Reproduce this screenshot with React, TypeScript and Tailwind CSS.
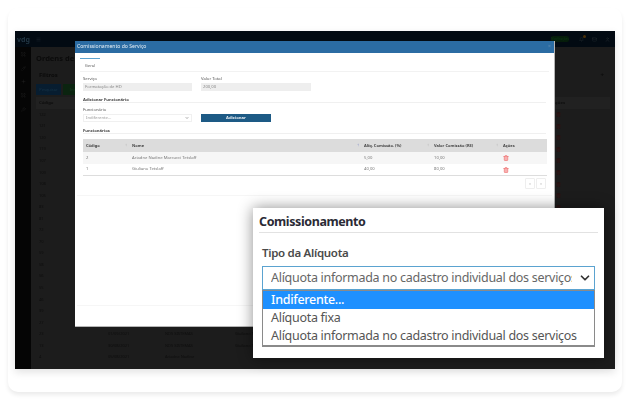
import React from 'react';
import { Trash2, ChevronDown, Menu, Bell, Mail, User, LayoutGrid, Pencil, Plus, Wrench } from 'lucide-react';

const font = { fontFamily: '"Noto Sans", sans-serif' };

const bgRows = ['122', '121', '120', '119', '107', '109', '108', '105', '83', '81', '72', '70', '59', '58', '56', '55', '46', '39', '27'];

const lowerRows = [
  ['23', '01/09/2021', 'NDS SISTEMAS', 'Giuliano Tetslaff'],
  ['13', '30/08/2021', 'NDS SISTEMAS', 'Giuliano Tetslaff'],
  ['4', '05/08/2021', 'Ariadne Nadine', ''],
];

const FakeField = ({ label, value, className }: { label: string; value: string; className: string }) => (
  <div className={className}>
    <div className="text-[4.2px] leading-[7px] text-[#555]">{label}</div>
    <div className="mt-[1px] h-[8px] bg-[#eeeeee] px-[2px] text-[4.2px] leading-[8px] text-[#888]">{value}</div>
  </div>
);

const SortIcon = () => <span className="text-[4px] leading-none text-[#aaa]">↕</span>;

const RedTrash = () => <Trash2 className="h-[6px] w-[6px] fill-[#f7b0b0] text-[#ee7070]" strokeWidth={2.5} />;

const tableCols = 'grid grid-cols-[46px_232px_70px_69px_47px] items-center';

const App: React.FC = () => {
  return (
    <div className="relative h-[400px] w-[630px] overflow-hidden bg-white" style={font}>
      {/* card */}
      <div className="ml-[8px] h-[392px] w-[614px] pt-[8px]">
        <div className="h-[384px] rounded-[10px] bg-white pl-[7px] pt-[23px] shadow-[0_3px_4px_rgba(0,0,0,0.08)]">
          {/* app screenshot, dimmed */}
          <div className="flex h-[338px] w-[600px] flex-col overflow-hidden bg-[#1c1c1c] shadow-[0_3px_8px_rgba(0,0,0,0.12)]">
            <div className="flex h-[16px] shrink-0 items-center bg-[#020a12] pl-[2px] pr-[5px] blur-[0.3px]">
              <span className="text-[7px] font-bold leading-none text-[#223644]">vdg</span>
              <Menu className="ml-[6px] h-[5px] w-[5px] text-[#1c2830]" />
              <span className="ml-auto mr-[10px] w-[18px] rounded-[2px] bg-[#051c0a] text-center text-[3px] leading-[6px] text-[#0c3a16]">Notificações</span>
              <div className="relative mr-[8px]">
                <Bell className="h-[5px] w-[5px] text-[#262d32]" />
                <span className="absolute right-[-2px] top-[-2px] h-[3px] w-[3px] rounded-full bg-[#4a3008]" />
              </div>
              <Mail className="mr-[8px] h-[5px] w-[5px] text-[#262d32]" />
              <User className="h-[5px] w-[5px] text-[#262d32]" />
            </div>
            <div className="flex min-h-0 flex-1">
              <div className="flex w-[16px] shrink-0 flex-col items-center gap-[8.7px] bg-[#050505] pt-[5px] text-[#242424] blur-[0.3px]">
                <LayoutGrid className="h-[5px] w-[5px]" />
                <Pencil className="h-[5px] w-[5px]" />
                <Plus className="h-[5px] w-[5px]" />
                <LayoutGrid className="h-[5px] w-[5px]" />
                <Wrench className="h-[5px] w-[5px]" />
              </div>
              <div className="min-w-0 flex-1 px-[5px] pt-[3px] blur-[0.3px]">
                <div className="text-[7.5px] font-bold leading-[16px] text-[#0b0b0b]">Ordens de Serviço</div>
                <div className="mt-[3px] flex items-center justify-between pl-[3px] pr-[6px] text-[6px] font-bold leading-[12px] text-[#0b0b0b]">
                  <span>Filtros</span>
                  <span>+</span>
                </div>
                <div className="mt-[3px] flex gap-[2px]">
                  <div className="flex h-[11px] w-[25px] items-center justify-center bg-[#071d30] text-[4px] text-[#173448]">Pesquisar</div>
                  <div className="flex h-[11px] w-[25px] items-center justify-center bg-[#0b2410] text-[4px] text-[#183a20]">Incluir</div>
                </div>
                <div className="mt-[2px] flex h-[12px] items-center justify-between bg-[#212121] px-[3px] text-[4.2px] font-bold text-[#0e0e0e]">
                  <span>Código</span>
                  <span className="mr-[42px]">Ações</span>
                </div>
                {bgRows.map((code) => (
                  <div key={code} className="flex h-[11.55px] items-center justify-between px-[3px] text-[4px] text-[#0e0e0e]">
                    <span>{code}</span>
                    <Trash2 className="mr-[46px] h-[5px] w-[5px] text-[#3a1010]" />
                  </div>
                ))}
                {lowerRows.map((r) => (
                  <div key={r[0]} className="flex h-[11.55px] items-center px-[3px] text-[4px] text-[#0e0e0e]">
                    <span className="w-[69px]">{r[0]}</span>
                    <span className="w-[57px]">{r[1]}</span>
                    <span className="w-[70px]">{r[2]}</span>
                    <span>{r[3]}</span>
                  </div>
                ))}
              </div>
            </div>
          </div>
        </div>
      </div>

      {/* modal over the dimmed app */}
      <div className="absolute left-[75px] top-[41px] flex h-[286px] w-[480px] flex-col border-b border-r border-[#b5b5b5] bg-white blur-[0.3px]">
        <div className="flex h-[12px] shrink-0 items-center justify-between bg-[#2b6ca3] pl-[2px] pr-[3px] text-[5.1px] text-[#e8f0f6]">
          <span>Comissionamento do Serviço</span>
          <span className="text-[#5d8cb3]">×</span>
        </div>
        <div className="px-[5px] pt-[5px]">
          <div className="border-b border-[#f2f2f2]">
            <div className="h-[13px] w-[20px] border-t border-[#5da3d0] pt-[3px] text-center text-[4.2px] leading-[7px] text-[#666]">Geral</div>
          </div>
        </div>
        <div className="flex gap-[9px] pl-[8px] pt-[3px]">
          <FakeField label="Serviço" value="Formatação de HD" className="w-[109px]" />
          <FakeField label="Valor Total" value="200,00" className="w-[110px]" />
        </div>
        <div className="mx-[8px] mt-[6px] border-b border-[#f0f0f0] text-[4.2px] font-bold leading-[5px] text-[#444]">Adicionar Funcionário</div>
        <div className="flex items-end gap-[9px] pl-[8px] pt-[3px]">
          <div className="w-[109px]">
            <div className="text-[4.2px] leading-[7px] text-[#555]">Funcionário</div>
            <div className="mt-[1px] flex h-[8px] items-center justify-between border border-[#f0f0f0] px-[2px] text-[4.2px] text-[#999]">
              <span>Indiferente...</span>
              <ChevronDown className="h-[4px] w-[4px] text-[#555]" strokeWidth={3} />
            </div>
          </div>
          <div className="flex h-[8px] w-[70px] items-center justify-center bg-[#1d5a85] text-[4.2px] font-bold text-[#e8eef3]">Adicionar</div>
        </div>
        <div className="mx-[8px] mt-[6px] border-b border-[#f0f0f0] text-[4.2px] font-bold leading-[5px] text-[#444]">Funcionários</div>
        <div className="ml-[8px] mt-[5px] w-[464px] border-b border-[#ddd]">
          <div className={`${tableCols} h-[13px] bg-[#dcdcdc] text-[4px] font-bold text-[#444]`}>
            <div className="flex justify-between pl-[3px] pr-[2px]"><span>Código</span><SortIcon /></div>
            <div className="flex justify-between pl-[3px] pr-[2px]"><span>Nome</span><span className="text-[4px] leading-none text-[#5566bb]">↑</span></div>
            <div className="flex justify-between pl-[3px] pr-[2px]"><span>Alíq. Comissão. (%)</span><SortIcon /></div>
            <div className="flex justify-between pl-[3px] pr-[2px]"><span>Valor Comissão (R$)</span><SortIcon /></div>
            <div className="pl-[3px]">Ações</div>
          </div>
          <div className={`${tableCols} h-[12px] bg-[#f6f6f6] text-[4.2px] text-[#777]`}>
            <div className="pl-[3px]">2</div>
            <div className="pl-[3px]">Ariadne Nadine Marcucci Tetslaff</div>
            <div className="pl-[3px]">5,00</div>
            <div className="pl-[3px]">10,00</div>
            <div className="pl-[3px]"><RedTrash /></div>
          </div>
          <div className={`${tableCols} h-[11px] text-[4.2px] text-[#777]`}>
            <div className="pl-[3px]">1</div>
            <div className="pl-[3px]">Giuliano Tetslaff</div>
            <div className="pl-[3px]">40,00</div>
            <div className="pl-[3px]">80,00</div>
            <div className="pl-[3px]"><RedTrash /></div>
          </div>
        </div>
        <div className="mr-[8px] mt-[2px] flex justify-end gap-[1px]">
          <div className="flex h-[11px] w-[10px] items-center justify-center rounded-[1px] border border-[#eee] text-[4px] text-[#aaa]">«</div>
          <div className="flex h-[11px] w-[10px] items-center justify-center rounded-[1px] border border-[#eee] text-[4px] text-[#aaa]">»</div>
        </div>
        <div className="mx-[2px] mt-[6px] h-[111px] border-b border-t border-[#f6f6f6]" />
      </div>

      {/* zoomed callout */}
      <div className="absolute left-[253px] top-[208px] h-[150px] w-[351px] bg-white px-[6px] shadow-[0_0_14px_rgba(0,0,0,0.45)]">
        <div className="flex h-[25px] items-end border-b border-[#e2e2e2] pb-[1px] text-[12.5px] font-bold leading-[18px] tracking-[-0.4px] text-[#2a2a35]">Comissionamento</div>
        <div className="ml-[3px] mt-[11px] text-[11.5px] font-semibold leading-[17px] tracking-[-0.3px] text-[#4a4a4a]">Tipo da Alíquota</div>
        <div className="ml-[3px] mt-[5px] w-[333px] text-[12.5px] tracking-[-0.29px]">
          <div className="flex h-[24px] items-center justify-between border border-[#5ba3d0] pl-[8px] pr-[2px] text-[#666]">
            <span className="w-[301px] overflow-hidden whitespace-nowrap">Alíquota informada no cadastro individual dos serviços</span>
            <ChevronDown className="h-[14px] w-[14px] text-[#333]" strokeWidth={3} />
          </div>
          <div className="border-x border-b-2 border-t border-[#8a8a8a] leading-[18px] text-[#555]">
            <div className="bg-[#1e90ff] pl-[8px] font-medium text-white">Indiferente...</div>
            <div className="pl-[8px]">Alíquota fixa</div>
            <div className="whitespace-nowrap pl-[8px]">Alíquota informada no cadastro individual dos serviços</div>
          </div>
        </div>
      </div>
    </div>
  );
};

export default App;
